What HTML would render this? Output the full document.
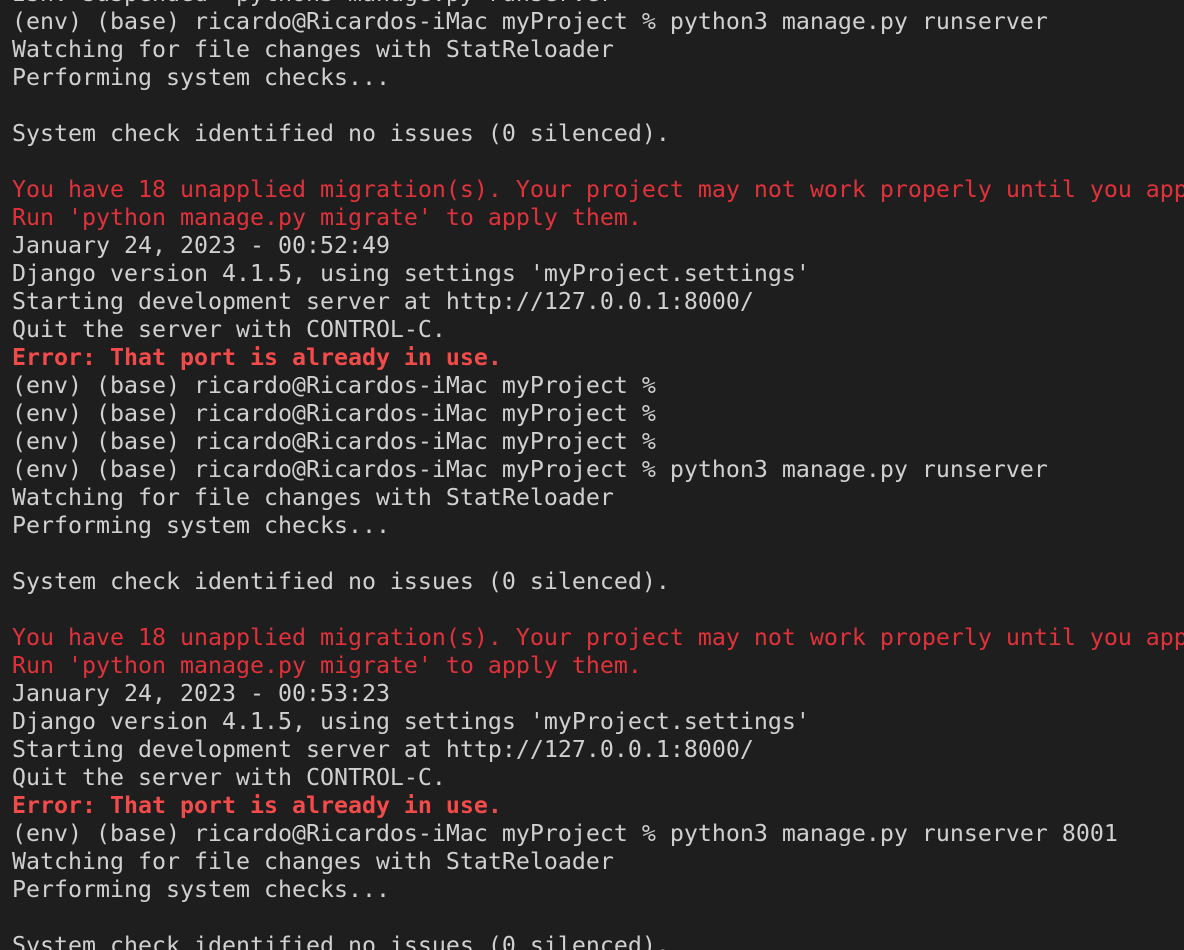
<!DOCTYPE html>
<html><head><meta charset="utf-8"><style>
html,body{margin:0;padding:0;background:#1e1e1e;width:1184px;height:950px;overflow:hidden}
.w{position:absolute;left:0;top:0;width:1184px;height:950px;overflow:hidden}
pre{position:absolute;left:12px;top:-20px;width:1172px;overflow:hidden;margin:0;font-family:"DejaVu Sans Mono","Liberation Mono",monospace;font-size:23.25px;line-height:28px;color:#d0d0d0;white-space:pre}
.r{color:#e0323a}
.b{color:#f34a4a;font-weight:bold}
</style></head><body><div class="w"><pre>zsh: suspended  python3 manage.py runserver
(env) (base) ricardo@Ricardos-iMac myProject % python3 manage.py runserver
Watching for file changes with StatReloader
Performing system checks...

System check identified no issues (0 silenced).

<span class="r">You have 18 unapplied migration(s). Your project may not work properly until you appl</span>
<span class="r">Run 'python manage.py migrate' to apply them.</span>
January 24, 2023 - 00:52:49
Django version 4.1.5, using settings 'myProject.settings'
Starting development server at http://127.0.0.1:8000/
Quit the server with CONTROL-C.
<span class="b">Error: That port is already in use.</span>
(env) (base) ricardo@Ricardos-iMac myProject %
(env) (base) ricardo@Ricardos-iMac myProject %
(env) (base) ricardo@Ricardos-iMac myProject %
(env) (base) ricardo@Ricardos-iMac myProject % python3 manage.py runserver
Watching for file changes with StatReloader
Performing system checks...

System check identified no issues (0 silenced).

<span class="r">You have 18 unapplied migration(s). Your project may not work properly until you appl</span>
<span class="r">Run 'python manage.py migrate' to apply them.</span>
January 24, 2023 - 00:53:23
Django version 4.1.5, using settings 'myProject.settings'
Starting development server at http://127.0.0.1:8000/
Quit the server with CONTROL-C.
<span class="b">Error: That port is already in use.</span>
(env) (base) ricardo@Ricardos-iMac myProject % python3 manage.py runserver 8001
Watching for file changes with StatReloader
Performing system checks...

System check identified no issues (0 silenced).
</pre></div></body></html>
